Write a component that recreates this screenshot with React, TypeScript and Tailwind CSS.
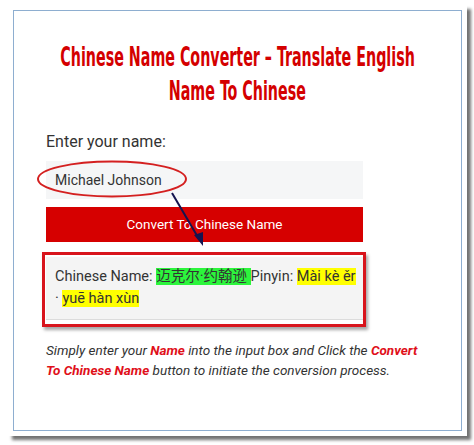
export default function App() {
  return (
    <div className="w-[474px] h-[445px] bg-white pl-[8px] pt-[5px] font-['Roboto','Noto_Sans_CJK_SC',sans-serif]">
      <div className="w-[459px] h-[431px] bg-white p-[5px] shadow-[4px_4px_3px_rgba(0,0,0,0.55)]">
        <div className="relative h-full border border-[#8eaed0] px-[32px] pt-[29px]">
          {/* Title */}
          <h1 className="text-[#d40000] font-bold text-[26px] leading-[34px] font-['DejaVu_Sans_Condensed',sans-serif]">
            <span className="flex justify-center whitespace-nowrap">
              <span className="inline-block scale-x-[0.61]">Chinese Name Converter – Translate English</span>
            </span>
            <span className="flex justify-center whitespace-nowrap">
              <span className="inline-block scale-x-[0.61]">Name To Chinese</span>
            </span>
          </h1>

          <div className="mt-[22px] w-[317px]">
            <label className="block text-[16px] leading-[24px] text-[#333]">Enter your name:</label>
            <div className="mt-[7px] h-[38px] bg-[#f5f6f7] flex items-center pl-[9px] text-[14px] text-[#333]">
              Michael Johnson
            </div>
            <button className="mt-[8px] h-[35px] w-full bg-[#d60000] text-white text-[13.5px]">
              Convert To Chinese Name
            </button>

            <div className="relative mt-[15px]">
              <div className="bg-[#f4f4f4] border-b border-[#dcdcdc] pl-[9px] pr-[2px] py-[9px] text-[14.5px] leading-[22px] text-[#333]">
                Chinese Name: <span className="bg-[#2cf53c]">迈克尔·约翰逊 </span>Pinyin:{" "}
                <span className="bg-[#ffff00]">Mài kè ěr</span> · <span className="bg-[#ffff00]">yuē hàn xùn </span>
              </div>
              {/* red annotation box */}
              <div className="absolute left-[-4px] right-[-3px] top-[-5px] bottom-[-7px] border-[3px] border-[#d8141c] shadow-[2px_3px_3px_rgba(0,0,0,0.35)]" />
            </div>
          </div>

          <p className="mt-[20px] w-[378px] text-[13.5px] leading-[20px] italic text-[#333]">
            Simply enter your <b className="text-[#e0101a]">Name</b> into the input box and Click the{" "}
            <b className="text-[#e0101a]">Convert To Chinese Name</b> button to initiate the conversion process.
          </p>

          {/* ellipse + arrow annotation */}
          <svg className="absolute left-[-14px] top-[-12px] pointer-events-none" width="474" height="445">
            <ellipse cx="112" cy="180" rx="74" ry="17.5" fill="none" stroke="#d42020" strokeWidth="2" />
            <line x1="172" y1="194" x2="199" y2="240" stroke="#141450" strokeWidth="2" />
            <polygon points="203,247 194,236 203,233" fill="#141450" />
          </svg>
        </div>
      </div>
    </div>
  );
}
